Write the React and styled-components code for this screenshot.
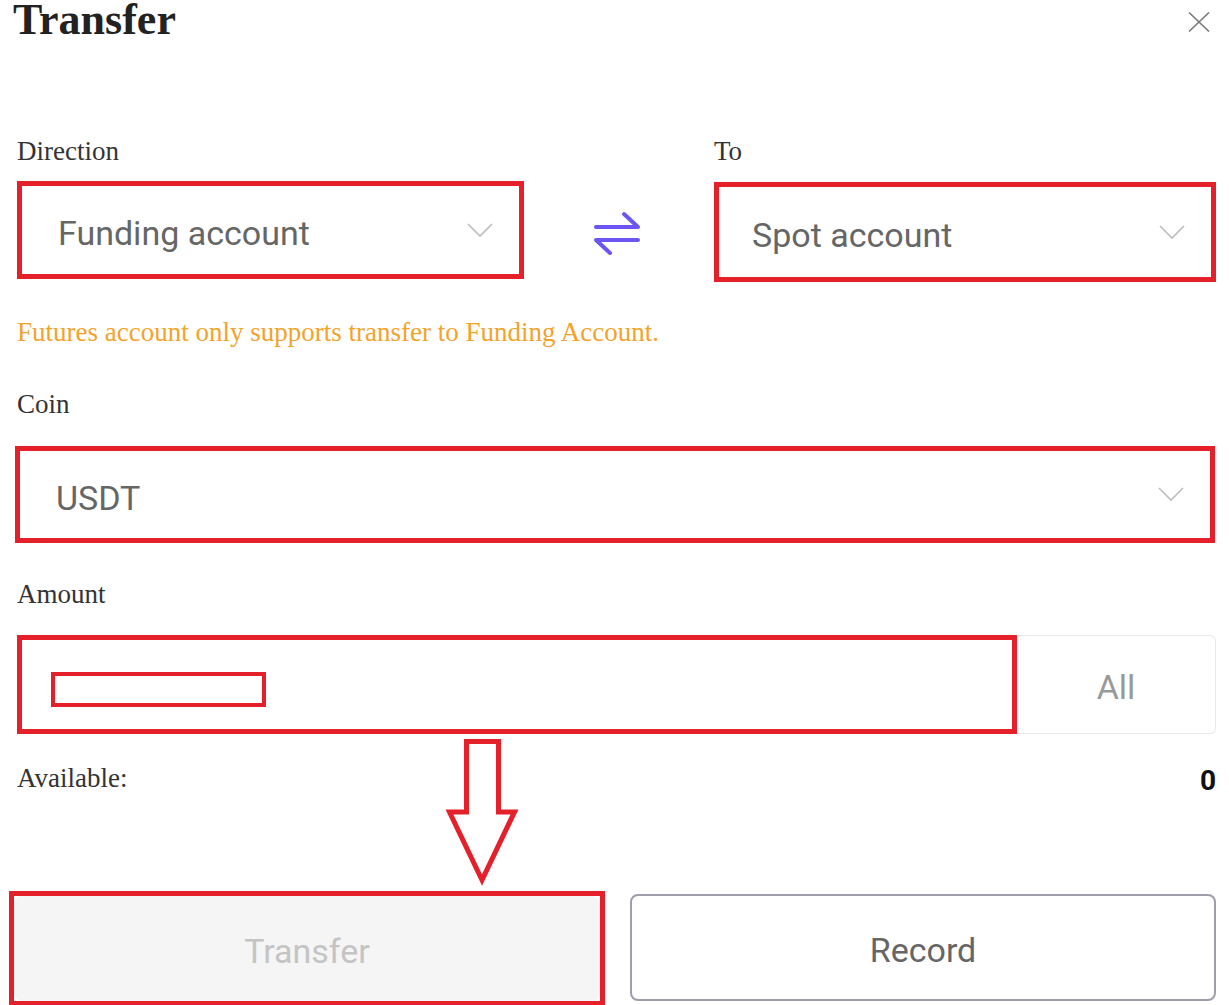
import React from "react";
import styled, { createGlobalStyle } from "styled-components";

const RED = "#e4202b";

const Global = createGlobalStyle`
  html, body { margin: 0; padding: 0; background: #fff; }
  * { box-sizing: border-box; }
`;

const Page = styled.div`
  position: relative;
  width: 1229px;
  min-height: 1005px;
  padding: 0 13px 0 17px;
  overflow: hidden;
  font-family: "Liberation Serif", "Times New Roman", serif;
`;

const Header = styled.div`
  display: flex;
  justify-content: space-between;
  align-items: flex-start;
  height: 40px;
`;

const Title = styled.h1`
  margin: 0 0 0 -4px;
  font-family: "Liberation Serif", "Times New Roman", serif;
  font-weight: 700;
  font-size: 44px;
  line-height: 40px;
  color: #222;
`;

const Close = styled.button`
  margin: 12px 6px 0 0;
  padding: 0;
  border: none;
  background: none;
  width: 22px;
  height: 20px;
  display: flex;
`;

const Label = styled.div`
  font-size: 27px;
  line-height: 32px;
  color: #333;
  margin-top: ${(p) => p.$mt || 0}px;
  margin-bottom: ${(p) => p.$mb || 0}px;
`;

const DirectionGrid = styled.div`
  margin-top: 95px;
  display: grid;
  grid-template-columns: 507px 1fr 502px;
  grid-template-rows: auto auto;
  row-gap: 14px;
`;

const SwapCell = styled.div`
  grid-column: 2;
  grid-row: 2;
  display: flex;
  justify-content: center;
  align-items: center;
  padding-right: 5px;
  padding-top: ${(p) => p.$pt || 0}px;
`;

const Select = styled.div`
  height: ${(p) => p.$h || 98}px;
  border: 5px solid ${RED};
  display: flex;
  align-items: center;
  justify-content: space-between;
  padding: 0 26px 0 ${(p) => p.$pl || 36}px;
  margin: ${(p) => p.$m || "0"};
  background: #fff;
`;

const SelectText = styled.span`
  font-family: Roboto, "Noto Sans", sans-serif;
  font-size: 34px;
  color: #666;
  padding-top: 6px;
`;

const Warning = styled.div`
  margin-top: 34px;
  font-size: 27px;
  line-height: 32px;
  color: #f3a32a;
`;

const AmountRow = styled.div`
  display: flex;
  height: 99px;
`;

const AmountInput = styled.div`
  width: 1000px;
  border: 5px solid ${RED};
  display: flex;
  align-items: center;
  padding-left: 29px;
`;

const ValueMark = styled.div`
  width: 215px;
  height: 35px;
  border: 4px solid ${RED};
  margin-top: 9px;
`;

const AllBox = styled.div`
  flex: 1;
  border: 1px solid #e8e8e8;
  border-left: none;
  border-radius: 0 6px 6px 0;
  display: flex;
  align-items: center;
  justify-content: center;
  font-family: Roboto, "Noto Sans", sans-serif;
  font-size: 34px;
  color: #999;
  padding-top: 4px;
`;

const AvailableRow = styled.div`
  margin-top: 27px;
  display: flex;
  justify-content: space-between;
  align-items: baseline;
`;

const AvailableLabel = styled.span`
  font-size: 27px;
  line-height: 32px;
  color: #333;
`;

const AvailableValue = styled.span`
  font-family: Roboto, "Noto Sans", sans-serif;
  font-weight: 700;
  font-size: 28px;
  color: #111;
  position: relative;
  top: 3px;
`;

const ButtonRow = styled.div`
  margin: 97px 0 0 -8px;
  display: grid;
  grid-template-columns: 596px 1fr;
  column-gap: 25px;
  align-items: center;
`;

const Highlight = styled.div`
  border: 5px solid ${RED};
  height: 115px;
`;

const Button = styled.button`
  width: 100%;
  height: ${(p) => (p.$ghost ? 107 : 105)}px;
  border-radius: 8px;
  font-family: Roboto, "Noto Sans", sans-serif;
  font-size: 34px;
  padding-top: 6px;
  background: ${(p) => (p.$ghost ? "#fff" : "#f5f5f5")};
  color: ${(p) => (p.$ghost ? "#666" : "#c4c4c4")};
  border: ${(p) => (p.$ghost ? "2px solid #9d9dab" : "none")};
  margin-top: ${(p) => (p.$ghost ? -2 : 0)}px;
`;

const ArrowMark = styled.svg`
  position: absolute;
  left: 440px;
  top: 730px;
  width: 90px;
  height: 160px;
`;

const Chevron = () => (
  <svg width="26" height="15" viewBox="0 0 26 15">
    <path d="M1 1 L13 13 L25 1" fill="none" stroke="#bdbdbd" strokeWidth="1.6" />
  </svg>
);

const SwapIcon = () => (
  <svg width="48" height="44" viewBox="0 0 48 44">
    <g fill="none" stroke="#6b55f4" strokeWidth="4" strokeLinecap="round" strokeLinejoin="round">
      <path d="M3 16 H45 L31 3" />
      <path d="M45 29 H3 L17 42" />
    </g>
  </svg>
);

export default function App() {
  return (
    <Page>
      <Global />
      <Header>
        <Title>Transfer</Title>
        <Close aria-label="close">
          <svg width="22" height="20" viewBox="0 0 22 20">
            <path d="M1 0.5 L21 19.5 M21 0.5 L1 19.5" stroke="#7a7a7a" strokeWidth="1.6" />
          </svg>
        </Close>
      </Header>

      <DirectionGrid>
        <Label>Direction</Label>
        <span />
        <Label>To</Label>
        <Select>
          <SelectText>Funding account</SelectText>
          <Chevron />
        </Select>
        <SwapCell $pt={2}>
          <SwapIcon />
        </SwapCell>
        <Select $h={100} $pl={33} $m="1px 0 0 0">
          <SelectText>Spot account</SelectText>
          <Chevron />
        </Select>
      </DirectionGrid>

      <Warning>Futures account only supports transfer to Funding Account.</Warning>

      <Label $mt={40} $mb={26}>Coin</Label>
      <Select $h={97} $m="0 1px 0 -2px">
        <SelectText>USDT</SelectText>
        <Chevron />
      </Select>

      <Label $mt={35} $mb={25}>Amount</Label>
      <AmountRow>
        <AmountInput>
          <ValueMark />
        </AmountInput>
        <AllBox>All</AllBox>
      </AmountRow>

      <AvailableRow>
        <AvailableLabel>Available:</AvailableLabel>
        <AvailableValue>0</AvailableValue>
      </AvailableRow>

      <ButtonRow>
        <Highlight>
          <Button disabled>Transfer</Button>
        </Highlight>
        <Button $ghost>Record</Button>
      </ButtonRow>

      <ArrowMark viewBox="0 0 90 160">
        <polygon
          points="26.5,11.5 58.5,11.5 58.5,82 74.5,82 42,150 9.5,82 26.5,82"
          fill="none"
          stroke={RED}
          strokeWidth="5"
          strokeLinejoin="miter"
        />
      </ArrowMark>
    </Page>
  );
}
